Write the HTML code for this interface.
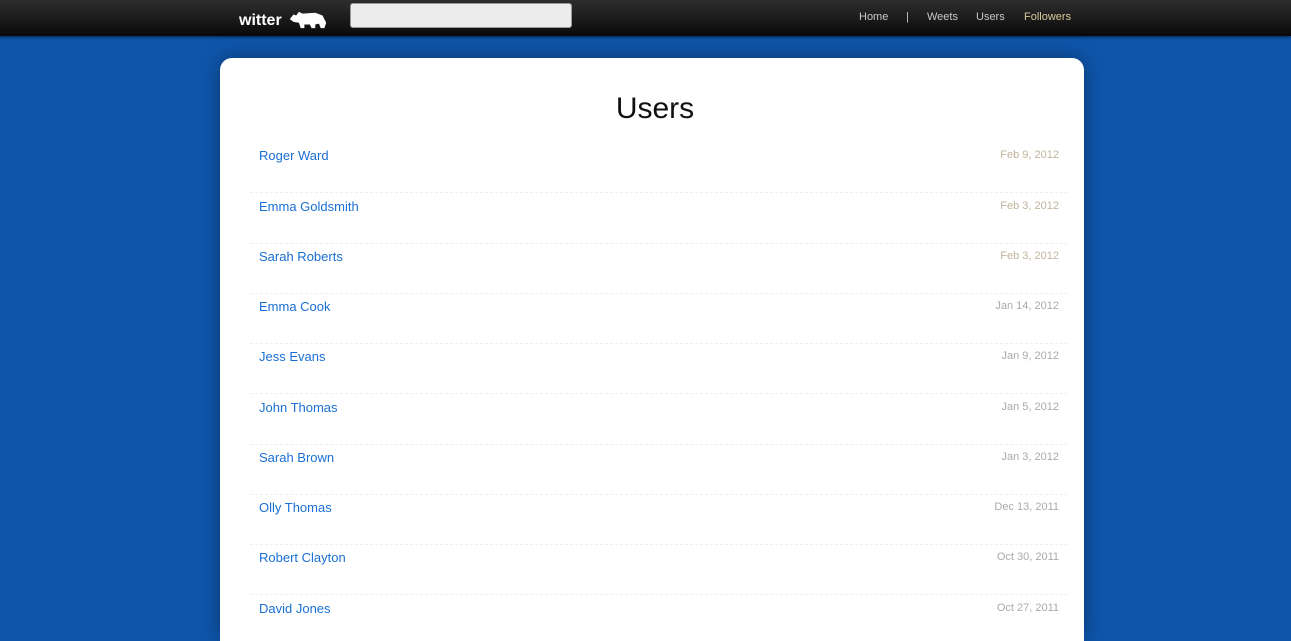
<!DOCTYPE html>
<html><head><style>
html,body{margin:0;height:641px;overflow:hidden}
body{background:#0f55aa;font-family:"Liberation Sans",sans-serif;width:1291px;position:relative}
.top{position:absolute;left:0;top:0;width:1291px;height:36px;background:linear-gradient(#2e2e2e,#0a0a0a);box-shadow:0 1px 3px rgba(0,0,0,.6)}
.logo{position:absolute;left:239px;top:10px;color:#fff;font-weight:bold;font-size:16px}
.search{position:absolute;left:350px;top:3px;width:220px;height:23px;background:#ececec;border:1px solid #999;border-radius:3px}
.nav{position:absolute;top:11px;font-size:11px;color:#c9c9c9}
.card{position:absolute;left:220px;top:58px;width:864px;height:583px;background:#fff;border-radius:12px 12px 0 0;box-shadow:0 0 20px rgba(0,0,0,.35)}
h1{margin:0;position:absolute;top:34px;width:100%;text-align:center;font-weight:normal;font-size:30px;color:#111;padding-left:6px;box-sizing:border-box}
.row{position:absolute;left:30px;width:818px;height:50px;border-bottom:1px dashed #eee}
.row a{position:absolute;left:9px;top:6px;font-size:13px;color:#1a6fd4;text-decoration:none}
.row span{position:absolute;right:9px;top:7px;font-size:11px;color:#aaa}
</style></head><body>
<div class="top">
<div class="logo">witter <svg width="44" height="20" viewBox="0 0 44 22" style="vertical-align:-5px"><path d="M2 10 L6 5 L9 6 L12 2 L16 4 L30 3 L38 6 L42 14 L40 20 L36 20 L34 15 L30 16 L30 20 L26 20 L24 16 L18 16 L18 20 L14 20 L12 14 L6 13 Z" fill="#fff"/></svg></div>
<div class="search"></div>
<div class="nav" style="left:859px">Home</div>
<div class="nav" style="left:906px">|</div>
<div class="nav" style="left:927px">Weets</div>
<div class="nav" style="left:976px">Users</div>
<div class="nav" style="left:1024px;color:#d8c89a">Followers</div>
</div>
<div class="card">
<h1>Users</h1>
<div class="row" style="top:84px"><a>Roger Ward</a><span style="color:#c0b49c">Feb 9, 2012</span></div>
<div class="row" style="top:135px"><a>Emma Goldsmith</a><span style="color:#c0b49c">Feb 3, 2012</span></div>
<div class="row" style="top:185px"><a>Sarah Roberts</a><span style="color:#c0b49c">Feb 3, 2012</span></div>
<div class="row" style="top:235px"><a>Emma Cook</a><span>Jan 14, 2012</span></div>
<div class="row" style="top:285px"><a>Jess Evans</a><span>Jan 9, 2012</span></div>
<div class="row" style="top:336px"><a>John Thomas</a><span>Jan 5, 2012</span></div>
<div class="row" style="top:386px"><a>Sarah Brown</a><span>Jan 3, 2012</span></div>
<div class="row" style="top:436px"><a>Olly Thomas</a><span>Dec 13, 2011</span></div>
<div class="row" style="top:486px"><a>Robert Clayton</a><span>Oct 30, 2011</span></div>
<div class="row" style="top:537px"><a>David Jones</a><span>Oct 27, 2011</span></div>
</div>
</body></html>
